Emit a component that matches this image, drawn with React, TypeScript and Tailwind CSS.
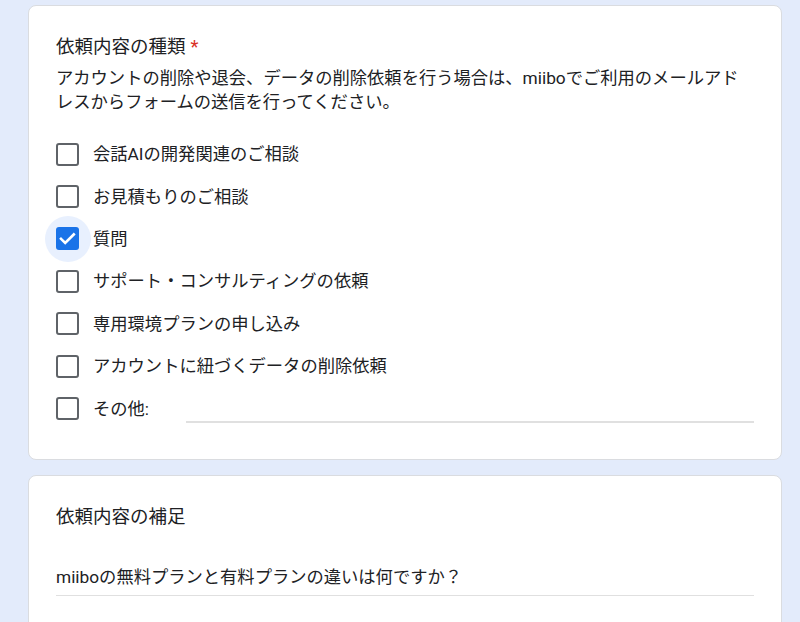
import React from "react";

const font = { fontFamily: '"Roboto", "Noto Sans CJK JP", sans-serif' };

function Box({ checked }: { checked?: boolean }) {
  if (checked) {
    return (
      <div className="relative flex h-[23px] w-[23px] shrink-0 items-center justify-center">
        <div className="absolute left-1/2 top-1/2 h-[46px] w-[46px] -translate-x-1/2 -translate-y-1/2 rounded-full bg-[#e8f0fe]" />
        <div className="relative flex h-[23px] w-[23px] items-center justify-center rounded-[3px] bg-[#1a73e8]">
          <svg width="23" height="23" viewBox="0 0 23 23">
            <path d="M5 11.8l4.2 4.2 8.6-8.6" fill="none" stroke="white" strokeWidth="2.6" strokeLinecap="square" />
          </svg>
        </div>
      </div>
    );
  }
  return <div className="h-[23px] w-[23px] shrink-0 rounded-[3px] border-[2.5px] border-[#5f6368]" />;
}

const options = [
  "会話AIの開発関連のご相談",
  "お見積もりのご相談",
  "質問",
  "サポート・コンサルティングの依頼",
  "専用環境プランの申し込み",
  "アカウントに紐づくデータの削除依頼",
];

export default function App() {
  return (
    <div className="h-[622px] w-[800px] overflow-hidden bg-[#e3ebfb] text-[#202124]" style={font}>
      <div className="ml-[28px] flex w-[754px] flex-col gap-[15px] pt-[5px]">
        <div className="rounded-[8px] border border-[#dadce0] bg-white px-[27px] pb-[29px] pt-[29px]">
          <div className="h-[24px] text-[18.5px] leading-[24px]">
            依頼内容の種類<span className="ml-[5px] text-[#d93025]">*</span>
          </div>
          <div className="mt-[7px] pr-[10px] text-[17.3px] leading-[24px]">
            アカウントの削除や退会、データの削除依頼を行う場合は、miiboでご利用のメールアドレスからフォームの送信を行ってください。
          </div>
          <div className="mt-[19px] flex flex-col">
            {options.map((o, i) => (
              <div key={o} className="flex h-[42.4px] items-center gap-[14px]">
                <Box checked={i === 2} />
                <span className="text-[17.3px] leading-[24px]">{o}</span>
              </div>
            ))}
            <div className="flex h-[42.4px] items-center gap-[14px]">
              <Box />
              <span className="w-[79px] shrink-0 text-[17.3px] leading-[24px]">その他:</span>
              <div className="mt-[26px] h-[2px] flex-1 bg-[#e0e0e0]" />
            </div>
          </div>
        </div>
        <div className="h-[200px] rounded-[8px] border border-[#dadce0] bg-white px-[27px] pt-[29px]">
          <div className="h-[24px] text-[18.5px] leading-[24px]">依頼内容の補足</div>
          <div className="mt-[36px] border-b border-[#e0e0e0] pb-[6px] text-[17.3px] leading-[24px]">
            miiboの無料プランと有料プランの違いは何ですか？
          </div>
        </div>
      </div>
    </div>
  );
}
